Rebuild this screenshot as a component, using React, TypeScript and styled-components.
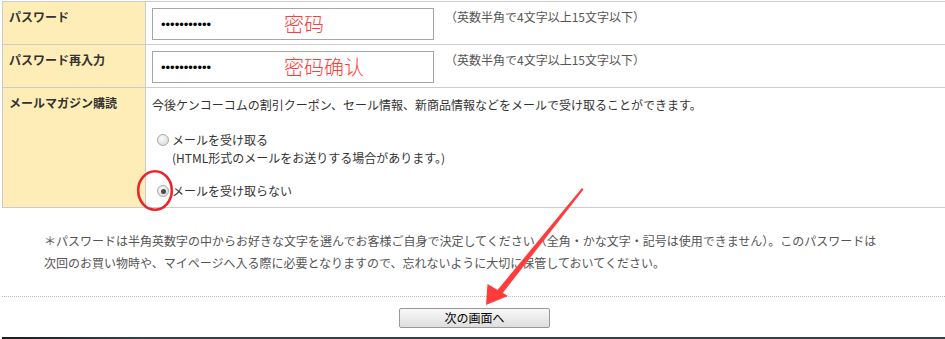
import React from 'react';
import styled, {createGlobalStyle} from 'styled-components';

const GlobalStyle = createGlobalStyle`
  html, body {
    margin: 0;
    padding: 0;
    background: #fff;
    overflow: hidden;
  }
  body {
    font-family: "Noto Sans CJK JP", "Noto Sans", sans-serif;
    color: #333;
  }
`;

const Page = styled.div`
  position: relative;
  width: 945px;
  height: 339px;
  overflow: hidden;
`;

const Content = styled.div`
  display: flex;
  flex-direction: column;
  padding: 1px 0 0 2px;
`;

const FormTable = styled.div`
  display: grid;
  grid-template-columns: 143px 820px;
  border-top: 1px solid #ccc;
  border-left: 1px solid #ccc;
`;

const LabelCell = styled.div`
  background: #ffedb7;
  border-right: 1px solid #ccc;
  border-bottom: 1px solid #ccc;
  padding: 7px 6px;
  font-size: 12px;
  line-height: 16px;
  font-weight: bold;
  color: #333;
`;

const ValueCell = styled.div<{$tall?: boolean}>`
  border-bottom: 1px solid #ccc;
  padding: ${p => (p.$tall ? '9px 6px 7px' : '6px 6px 4px')};
  font-size: 12px;
  line-height: 16px;
  color: #333;
`;

const InputRow = styled.div`
  display: flex;
  align-items: flex-start;
  gap: 11px;
`;

const InputWrap = styled.div`
  position: relative;
`;

const PasswordInput = styled.input`
  box-sizing: border-box;
  width: 282px;
  height: 32px;
  margin: 0;
  padding: 0 8px;
  border: 1px solid #a6a6a6;
  font-family: "Liberation Sans", sans-serif;
  font-size: 13px;
  color: #000;
  background: #fff;
  outline: none;
`;

const Annotation = styled.span`
  position: absolute;
  left: 132px;
  top: 3px;
  font-family: "Noto Sans CJK SC", sans-serif;
  font-size: 20px;
  line-height: 26px;
  font-weight: 300;
  color: #ff3c3c;
  pointer-events: none;
`;

const Hint = styled.span`
  margin-top: 1px;
  color: #555;
  font-size: 12px;
  line-height: 16px;
`;

const Lead = styled.p`
  margin: 0;
`;

const RadioList = styled.div`
  display: flex;
  flex-direction: column;
  gap: 15px;
  margin: 18px 0 0 5px;
`;

const RadioOption = styled.label`
  display: grid;
  grid-template-columns: 12px auto;
  column-gap: 3px;
  align-items: center;
  line-height: 18px;
`;

const Radio = styled.input`
  appearance: none;
  box-sizing: border-box;
  width: 12px;
  height: 12px;
  margin: 0;
  border-radius: 50%;
  border: 1px solid #a9a9a9;
  background: radial-gradient(circle at 40% 35%, #fafafa 0%, #e4e4e4 60%, #d2d2d2 100%);
  position: relative;

  &:checked::after {
    content: '';
    position: absolute;
    left: 2.5px;
    top: 2.5px;
    width: 5px;
    height: 5px;
    border-radius: 50%;
    background: #4a4a4a;
  }
`;

const SubNote = styled.span`
  grid-column: 2;
`;

const Notes = styled.div`
  margin: 22px 0 0 42px;
  font-size: 12px;
  line-height: 22px;
  color: #555;
`;

const Divider = styled.div`
  margin-top: 22px;
  border-top: 1px dotted #bbb;
`;

const ButtonBar = styled.div`
  display: flex;
  justify-content: center;
  padding: 11px 0 9px 2px;
`;

const NextButton = styled.button`
  box-sizing: border-box;
  width: 151px;
  height: 20px;
  padding: 0;
  border: 1px solid #999;
  border-radius: 2px;
  background: linear-gradient(#f8f8f8, #dedede);
  font-family: "Noto Sans CJK JP", sans-serif;
  font-size: 12px;
  line-height: 18px;
  color: #000;
`;

const FooterBar = styled.div`
  height: 3px;
  background: linear-gradient(90deg, #1c1c1c 0%, #37414b 15%, #37414b 100%);
`;

const Overlay = styled.svg`
  position: absolute;
  left: 0;
  top: 0;
  pointer-events: none;
`;

export default function App() {
  return (
    <Page>
      <GlobalStyle />
      <Content>
        <FormTable>
          <LabelCell>パスワード</LabelCell>
          <ValueCell>
            <InputRow>
              <InputWrap>
                <PasswordInput type="password" defaultValue="kenko123456" readOnly />
                <Annotation>密码</Annotation>
              </InputWrap>
              <Hint>（英数半角で4文字以上15文字以下）</Hint>
            </InputRow>
          </ValueCell>

          <LabelCell>パスワード再入力</LabelCell>
          <ValueCell>
            <InputRow>
              <InputWrap>
                <PasswordInput type="password" defaultValue="kenko123456" readOnly />
                <Annotation>密码确认</Annotation>
              </InputWrap>
              <Hint>（英数半角で4文字以上15文字以下）</Hint>
            </InputRow>
          </ValueCell>

          <LabelCell>メールマガジン購読</LabelCell>
          <ValueCell $tall>
            <Lead>今後ケンコーコムの割引クーポン、セール情報、新商品情報などをメールで受け取ることができます。</Lead>
            <RadioList>
              <RadioOption>
                <Radio type="radio" name="mailmag" />
                <span>メールを受け取る</span>
                <SubNote>(HTML形式のメールをお送りする場合があります。)</SubNote>
              </RadioOption>
              <RadioOption>
                <Radio type="radio" name="mailmag" defaultChecked />
                <span>メールを受け取らない</span>
              </RadioOption>
            </RadioList>
          </ValueCell>
        </FormTable>

        <Notes>
          ＊パスワードは半角英数字の中からお好きな文字を選んでお客様ご自身で決定してください（全角・かな文字・記号は使用できません）。このパスワードは
          <br />
          次回のお買い物時や、マイページへ入る際に必要となりますので、忘れないように大切に保管しておいてください。
        </Notes>

        <Divider />
        <ButtonBar>
          <NextButton type="button">次の画面へ</NextButton>
        </ButtonBar>
        <FooterBar />
      </Content>

      {/* red markup drawn on top of the screenshot */}
      <Overlay width="945" height="339" viewBox="0 0 945 339">
        <ellipse cx="155" cy="190.5" rx="16.8" ry="19.2" fill="none" stroke="#e8262c" strokeWidth="2.6" />
        <polygon points="582,188 583.5,189.5 502,294 497.5,290" fill="#ff3b3b" />
        <polygon points="486,305 487.5,284 508,296" fill="#ff3b3b" />
      </Overlay>
    </Page>
  );
}
